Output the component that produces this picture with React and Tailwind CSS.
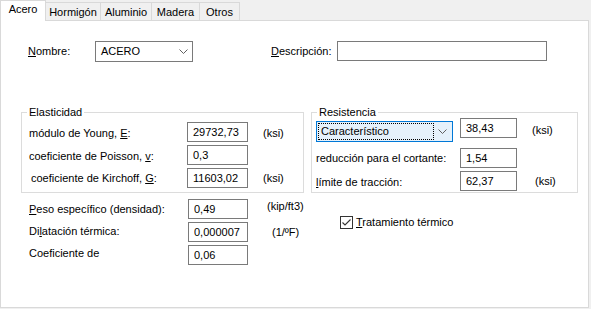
import React from 'react';

const tabs = [
  { name: 'Acero', w: 'w-[46px]', active: true },
  { name: 'Hormigón', w: 'w-[55px]' },
  { name: 'Aluminio', w: 'w-[51px]' },
  { name: 'Madera', w: 'w-[48px]' },
  { name: 'Otros', w: 'w-[40px]' },
];

const Chevron = () => (
  <svg width="9" height="5" viewBox="0 0 9 5" className="shrink-0">
    <path d="M0.5 0.5 L4.5 4.5 L8.5 0.5" fill="none" stroke="#606060" strokeWidth="1" />
  </svg>
);

const Box = ({ value, w = 'w-[61px]' }) => (
  <input
    readOnly
    value={value}
    className={`${w} h-[20px] border border-[#7a7a7a] bg-white px-[5px] text-[11px] text-black outline-none`}
  />
);

const App = () => {
  return (
    <div className="w-[591px] h-[309px] bg-[#f0f0f0] text-[11px] leading-[13px] text-black font-['Liberation_Sans',Arial,sans-serif] overflow-hidden">
      {/* Tabs */}
      <div className="flex items-end h-[20px]">
        {tabs.map((t, i) => (
          <div
            key={t.name}
            className={`${t.w} flex items-center justify-center border-t border-r border-[#d9d9d9] ${i === 0 ? 'border-l' : ''} ${
              t.active ? 'h-[21px] bg-white relative z-10 -mb-[1px] pb-[3px]' : 'h-[18px] bg-[#f0f0f0] pt-[1px]'
            }`}
          >
            {t.name}
          </div>
        ))}
      </div>

      {/* Panel */}
      <div className="w-[589px] h-[288px] border border-[#d9d9d9] bg-white">
        {/* Nombre / Descripción */}
        <div className="flex items-start mt-[20px] pl-[27px]">
          <div className="w-[67px] h-[21px] flex items-center">
            <span><u>N</u>ombre:</span>
          </div>
          <div className="w-[98px] h-[21px] border border-[#7a7a7a] flex items-center justify-between pl-[5px] pr-[4px]">
            <span>ACERO</span>
            <Chevron />
          </div>
          <div className="ml-[78px] w-[66px] h-[20px] flex items-center">
            <span><u>D</u>escripción:</span>
          </div>
          <Box value="" w="w-[210px]" />
        </div>

        {/* Group boxes */}
        <div className="flex pl-[20px] mt-[44px]">
          <fieldset className="w-[283px] h-[87px] border border-[#dcdcdc]">
            <legend className="ml-[5px] px-[2px] leading-[12px]">Elasticidad</legend>
            <div className="pl-[7px]">
              <div className="flex items-center h-[20px] mt-[4px]">
                <span className="w-[158px] pt-[3px]">módulo de Young, <u>E</u>:</span>
                <Box value="29732,73" />
                <span className="ml-[15px] pt-[3px]">(ksi)</span>
              </div>
              <div className="flex items-center h-[20px] mt-[3px]">
                <span className="w-[158px] pt-[3px]">coeficiente de Poisson, <u>v</u>:</span>
                <Box value="0,3" />
              </div>
              <div className="flex items-center h-[20px] mt-[3px]">
                <span className="w-[158px] pl-[2px]">coeficiente de Kirchoff, <u>G</u>:</span>
                <Box value="11603,02" />
                <span className="ml-[15px]">(ksi)</span>
              </div>
            </div>
          </fieldset>

          <fieldset className="ml-[7px] w-[267px] h-[87px] border border-[#dcdcdc]">
            <legend className="ml-[5px] px-[2px] leading-[12px]">Resistencia</legend>
            <div className="pl-[4px]">
              <div className="flex items-start">
                <div className="mt-[3px] w-[137px] h-[21px] border border-[#0078d7] bg-[#e5f1fb] flex items-center pl-[1px] pr-[5px]">
                  <div className="w-[116px] h-[17px] border border-dotted border-black flex items-center pl-[2px]">
                    Característico
                  </div>
                  <div className="ml-auto">
                    <Chevron />
                  </div>
                </div>
                <div className="ml-[7px]">
                  <Box value="38,43" w="w-[57px]" />
                </div>
                <span className="ml-[15px] h-[20px] flex items-center pt-[5px]">(ksi)</span>
              </div>
              <div className="flex items-center h-[20px] mt-[6px]">
                <span className="w-[144px]">reducción para el cortante:</span>
                <Box value="1,54" w="w-[57px]" />
              </div>
              <div className="flex items-center h-[20px] mt-[3px]">
                <span className="w-[144px] pt-[2px]"><u>l</u>ímite de tracción:</span>
                <Box value="62,37" w="w-[57px]" />
                <span className="ml-[18px]">(ksi)</span>
              </div>
            </div>
          </fieldset>
        </div>

        {/* Lower section */}
        <div className="flex mt-[6px]">
          <div className="w-[339px] pl-[28px] flex flex-col gap-[3px]">
            <div className="flex items-center h-[20px]">
              <span className="w-[159px]"><u>P</u>eso específico (densidad):</span>
              <Box value="0,49" w="w-[60px]" />
              <span className="ml-[19px] pb-[5px]">(kip/ft3)</span>
            </div>
            <div className="flex items-center h-[20px]">
              <span className="w-[159px] pb-[2px]">Di<u>l</u>atación térmica:</span>
              <Box value="0,000007" w="w-[60px]" />
              <span className="ml-[24px]">(1/ºF)</span>
            </div>
            <div className="flex items-center h-[20px]">
              <span className="w-[159px] pb-[3px]">Coeficiente de</span>
              <Box value="0,06" w="w-[60px]" />
            </div>
          </div>
          <label className="mt-[17px] flex items-center h-[13px] self-start">
            <svg width="13" height="13" viewBox="0 0 13 13" className="shrink-0">
              <rect x="0.5" y="0.5" width="12" height="12" fill="#fff" stroke="#333" />
              <path d="M2.5 6.5 L5 9 L10.5 3.5" fill="none" stroke="#333" strokeWidth="1.1" />
            </svg>
            <span className="ml-[3px]"><u>T</u>ratamiento térmico</span>
          </label>
        </div>
      </div>
    </div>
  );
};

export default App;
